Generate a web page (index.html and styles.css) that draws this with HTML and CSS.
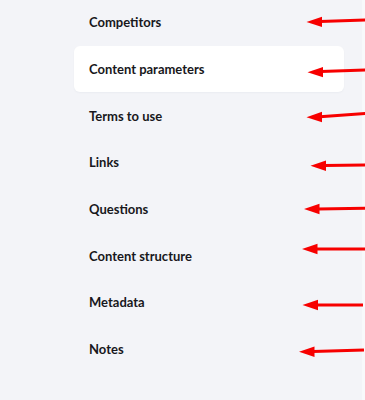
FILE: index.html
```html
<!DOCTYPE html>
<html>
<head>
<meta charset="utf-8">
<link rel="stylesheet" href="styles.css">
</head>
<body>
<div class="page">
  <ul class="menu">
    <li class="item">Competitors</li>
    <li class="item active">Content parameters</li>
    <li class="item">Terms to use</li>
    <li class="item">Links</li>
    <li class="item">Questions</li>
    <li class="item">Content structure</li>
    <li class="item">Metadata</li>
    <li class="item">Notes</li>
  </ul>
  <div class="edge"></div>
  <svg class="arrows" width="365" height="400" viewBox="0 0 365 400">
    <g fill="#f70000" stroke="#f70000">
      <line x1="320" y1="21.6" x2="366" y2="20" stroke-width="3"/>
      <polygon points="306.5,22 322,16.8 322,27" stroke="none"/>
      <line x1="321" y1="71.6" x2="366" y2="70" stroke-width="3"/>
      <polygon points="307.5,72.3 323,67 323,77.3" stroke="none"/>
      <line x1="320" y1="116.8" x2="366" y2="113.5" stroke-width="3"/>
      <polygon points="306.5,117.3 322,111.8 322,122.2" stroke="none"/>
      <line x1="324" y1="165.6" x2="366" y2="165" stroke-width="3"/>
      <polygon points="310.5,165.7 326,160.5 326,170.9" stroke="none"/>
      <line x1="318" y1="209" x2="366" y2="208.3" stroke-width="3"/>
      <polygon points="304,209 319.5,203.8 319.5,214.2" stroke="none"/>
      <line x1="316" y1="249" x2="366" y2="249" stroke-width="3"/>
      <polygon points="302,249 317.5,243.8 317.5,254.2" stroke="none"/>
      <line x1="316" y1="305" x2="363" y2="305" stroke-width="3"/>
      <polygon points="302.5,305 318,299.8 318,310.2" stroke="none"/>
      <line x1="313" y1="351.5" x2="364" y2="350" stroke-width="3"/>
      <polygon points="299,351.7 314.5,346.5 314.5,356.9" stroke="none"/>
    </g>
  </svg>
</div>
</body>
</html>
```
FILE: styles.css
```css
html, body {
  margin: 0;
  padding: 0;
  background: #f3f4f8;
}
.page {
  position: relative;
  width: 365px;
  height: 400px;
  overflow: hidden;
}
.menu {
  list-style: none;
  margin: -1px 0 0 74px;
  padding: 0;
  width: 270px;
  display: flex;
  flex-direction: column;
}
.item {
  height: 46.7px;
  display: flex;
  align-items: center;
  padding-left: 15px;
  font-family: Lato, "Noto Sans", sans-serif;
  font-weight: 700;
  font-size: 13px;
  color: #18181c;
  border-radius: 6px;
}
.item.active {
  background: #ffffff;
  box-shadow: 0 1px 2px rgba(30, 40, 80, 0.04);
}
.edge {
  position: absolute;
  top: 0;
  right: 0;
  width: 3px;
  height: 400px;
  background: #f8f9fb;
}
.arrows {
  position: absolute;
  top: 0;
  left: 0;
}
```
